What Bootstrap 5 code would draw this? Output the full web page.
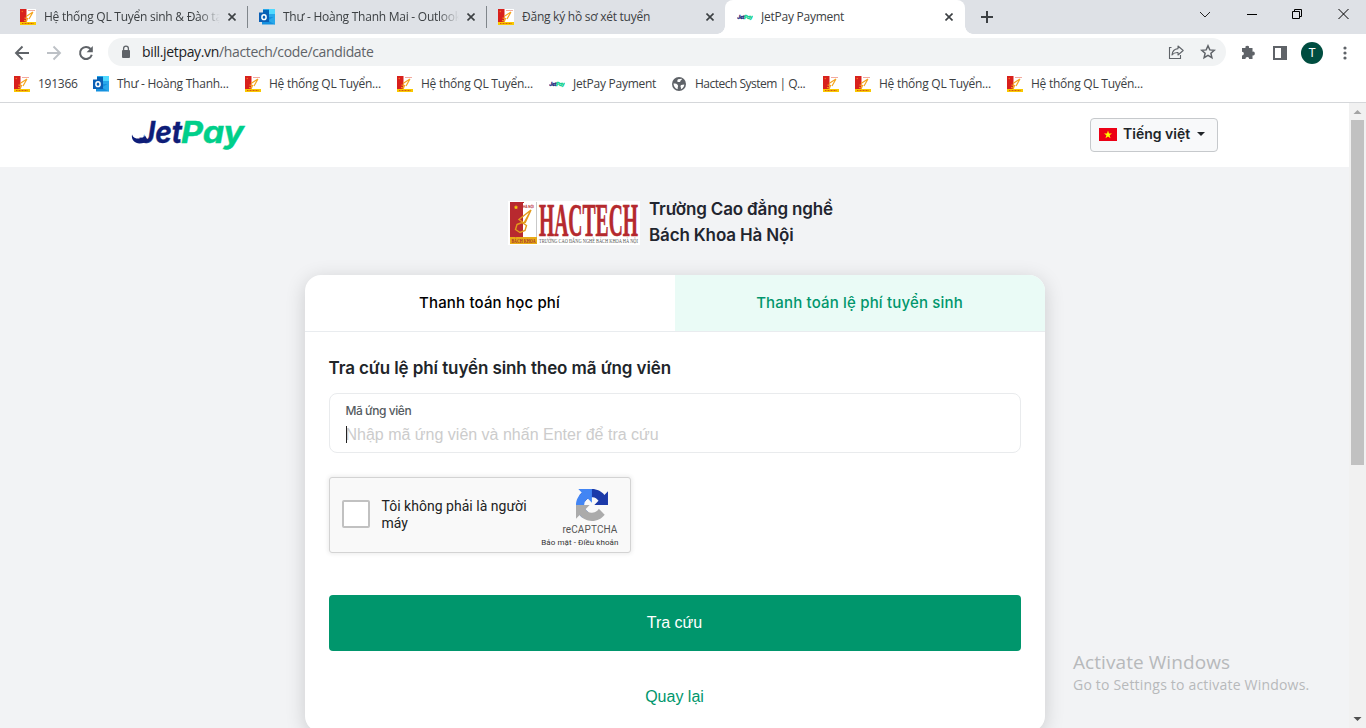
<!DOCTYPE html>
<html lang="vi">
<head>
<meta charset="utf-8">
<title>JetPay Payment</title>
<link rel="stylesheet" href="https://cdn.jsdelivr.net/npm/bootstrap@5.3.0/dist/css/bootstrap.min.css">
<style>
body{height:728px;overflow:hidden;font-family:Inter,"Noto Sans",sans-serif;color:#212529;background:#fff}
svg{display:block;flex:none}
.chrome-ui{font-family:"Open Sans","Noto Sans",sans-serif;font-size:12px;color:#3c4043;letter-spacing:-.25px}
.tabstrip{height:34px;background:#dee1e6;padding-left:8px}
.tab-item{width:239px;padding:0 11px 0 12px;position:relative}
.tab-item+.tab-item:not(.current){padding-left:11px;border-left:1px solid #80868b;border-image:linear-gradient(transparent 7px,#80868b 7px,#80868b 27px,transparent 27px) 1}
.tab-item.current{width:240px;padding-right:12px;background:#fff;border-radius:8px 8px 0 0}
.tab-item.current::before,.tab-item.current::after{content:"";position:absolute;bottom:0;width:8px;height:8px}
.tab-item.current::before{left:-8px;background:radial-gradient(circle at 0 0,#dee1e6 7.5px,#fff 8px)}
.tab-item.current::after{right:-8px;background:radial-gradient(circle at 100% 0,#dee1e6 7.5px,#fff 8px)}
.tab-title{width:176px;margin-left:8px;white-space:nowrap;overflow:hidden}
.fade-end{-webkit-mask-image:linear-gradient(90deg,#000 155px,transparent 176px)}
.win-controls{width:167px;padding:7px 17px 0 0}
.toolbar{height:34px;padding-top:4px}
.nav-icons{width:108px;padding-left:14px;gap:16px}
.omnibox{width:1118px;height:28px;border-radius:14px;background:#f1f3f4;padding:0 10px 0 8px}
.address{font-size:14px;color:#5f6368;margin-left:10px;letter-spacing:-.35px;margin-bottom:1px}
.address b{font-weight:400;color:#202124}
.tool-icons{padding-left:14px}
.avatar{width:22px;height:22px;border-radius:50%;background:#004d40;color:#fff;font:12px Roboto,sans-serif;margin-left:13px}
.menu-dots{margin-left:20px}
.bookmarks{height:35px;display:grid;grid-template-columns:79px 152px 152px 152px 122px 152px 32px 152px 152px;padding:0 0 2px 14px;border-bottom:1px solid #d5d7da;align-items:center}
.bookmarks>span{display:flex;align-items:center;gap:8px;white-space:nowrap}
.bookmarks>.tighter{letter-spacing:-.5px}
.viewport{height:625px}
.page-area{background:#f2f3f5;overflow:hidden}
.site-header{height:64px;background:#fff;padding:0 131px}
.lang-btn{width:128px;height:34px;border:1px solid #c6c9cc;border-radius:4px;background:#f8f9fa;font-size:14px;line-height:20px;font-weight:600;color:#212529;padding:0 8px 2px;margin-bottom:1px}
.lang-btn::after{margin-left:7px}
.lang-btn svg{margin:2px 6px 0 0}
.school{height:108px;padding:3px 0 0 508px}
.school-name{font-size:17px;font-weight:600;line-height:26px;color:#22252f;margin:-2px 0 0 9px;letter-spacing:-.15px}
.pay-card{width:740px;height:457px;border-radius:16px;box-shadow:0 4px 20px rgba(0,0,0,.16);border:0}
.pay-tabs{height:57px;border-bottom:1px solid #e9ecef;font-size:15px;font-weight:500;color:#000;letter-spacing:.17px}
.pay-tabs .chosen{background:#eafbf6;color:#00966c;border-top-right-radius:16px}
.pay-tabs>div{width:370px}
.form-title{font-size:17px;font-weight:600;line-height:24px;margin:24px 0 13px;letter-spacing:-.09px}
.code-field{height:60px;border:1px solid #e9ebed;border-radius:8px;padding:8px 16px}
.code-label{font-size:12px;line-height:18px;color:#555b61;font-weight:500;letter-spacing:-.45px}
.code-hint{font:16px/22px "Liberation Sans",sans-serif;color:#ccc;margin-top:4px;position:relative}
.caret-line{position:absolute;left:0;top:2px;width:1px;height:17px;background:#222}
.captcha{width:302px;height:76px;background:#f9f9f9;border:1px solid #d3d3d3;border-radius:3px;box-shadow:0 0 4px 1px rgba(0,0,0,.08);margin-top:24px;font-family:Roboto,sans-serif;padding:0 0 2px 12px}
.tick-box{width:28px;height:28px;border:2px solid #c1c1c1;border-radius:2px;background:#fff}
.captcha-text{width:152px;margin:1px 0 0 12px;font-size:14px;line-height:17px;color:#222;letter-spacing:.02px}
.captcha-brand{width:92px;color:#555;font-size:10px;padding:11px 8px 0 0}
.captcha-brand svg{margin-right:14px}
.rc-name{line-height:12px;margin:3px 4px 0 0;letter-spacing:.12px}
.rc-links{font-size:8px;line-height:13px;color:#333;white-space:nowrap;margin-right:3px;letter-spacing:.07px}
.lookup{height:56px;background:#00966c;border-radius:4px;color:#fff;margin-top:42px;font:16px "Liberation Sans",sans-serif}
.go-back{font:16px "Liberation Sans",sans-serif;color:#00966c;margin-top:37px}
.scroll-track{width:17px;background:#f1f1f1}
.scroll-thumb{width:13px;height:345px;background:#c1c1c1;margin-top:2px}
.watermark{position:absolute;left:1073px;top:649px;color:#b7b9bb;font-family:"Open Sans",sans-serif;white-space:nowrap}
.watermark .wm-big{font-size:19px;line-height:26px;letter-spacing:.07px}
.watermark .wm-sub{font-size:14px;line-height:20px;letter-spacing:.2px}
</style>
</head>
<body>
<svg width="0" height="0" class="position-absolute">
<defs>
<symbol id="hac" viewBox="0 0 16 16"><path fill="#fff" d="M0 0h16v16H0z"/><path fill="#d8201c" d="M0 0h6.500v13H0z"/><path fill="#f2a9a0" d="M8 1h7v1H8z"/><path fill="#f9c900" d="M0 13h16v3H0z"/><path d="M2 14.500h12" stroke="#d85a10" stroke-width="1.200" stroke-dasharray="1 .5"/><path d="M13 3 6 7.500M13 3 9 10M4.500 9l3 .5-1 2.500-2.500-.5" fill="none" stroke="#f4a51c" stroke-width="1.200"/><circle cx="2.300" cy="2.500" r=".8" fill="#f0701c"/></symbol>
<symbol id="outlook" viewBox="0 0 16 16"><path fill="#28a8ea" d="M4 0h12v8H4z"/><path fill="#50d9ff" d="M10 0h6v5h-6z"/><path fill="#0364b8" d="M4 1h6v5H4z"/><path fill="#1490df" d="M3 8h13v7.500H3z"/><path fill="#28a8ea" d="m16 7-7 4.500 7 4z"/><path fill="#0a5fb5" d="M0 3.500h10v9.500H0z"/><ellipse cx="5" cy="8.200" rx="2.100" ry="2.400" fill="none" stroke="#fff" stroke-width="1.500"/></symbol>
<symbol id="jp" viewBox="0 0 16 16"><g font-family="Inter" font-weight="700" font-style="italic" font-size="4.800" stroke-width=".3"><text x=".3" y="9.500" textLength="7" lengthAdjust="spacingAndGlyphs" fill="#15247b" stroke="#15247b">Jet</text><text x="7.200" y="9.500" textLength="8.300" lengthAdjust="spacingAndGlyphs" fill="#00cf8a" stroke="#00cf8a">Pay</text></g></symbol>
<symbol id="shut" viewBox="0 0 8 8"><path d="m.5.5 7 7m0-7-7 7" stroke="#3c4043" stroke-width="1.600"/></symbol>
<clipPath id="stemClip"><path d="M16 0h50v36H0V21l12.500-.5z"/></clipPath>
</defs>
</svg>

<div class="chrome-ui">
  <div class="tabstrip d-flex">
    <div class="tab-item d-flex align-items-center"><svg width="16" height="16"><use href="#hac"/></svg><span class="tab-title fade-end">Hệ thống QL Tuyển sinh &amp; Đào tạo</span><svg class="ms-auto" width="8" height="8"><use href="#shut"/></svg></div>
    <div class="tab-item d-flex align-items-center"><svg width="16" height="16"><use href="#outlook"/></svg><span class="tab-title fade-end">Thư - Hoàng Thanh Mai - Outlook</span><svg class="ms-auto" width="8" height="8"><use href="#shut"/></svg></div>
    <div class="tab-item d-flex align-items-center"><svg width="16" height="16"><use href="#hac"/></svg><span class="tab-title">Đăng ký hồ sơ xét tuyển</span><svg class="ms-auto" width="8" height="8"><use href="#shut"/></svg></div>
    <div class="tab-item current d-flex align-items-center"><svg width="16" height="16"><use href="#jp"/></svg><span class="tab-title">JetPay Payment</span><svg class="ms-auto" width="8" height="8"><use href="#shut"/></svg></div>
    <svg class="ms-3 mt-2" width="12" height="18" viewBox="0 0 12 18"><path d="M0 9h12M6 3v12" stroke="#3c4043" stroke-width="2"/></svg>
    <div class="win-controls d-flex justify-content-between ms-auto">
      <svg width="12" height="14"><path d="m1 5 5 5 5-5" fill="none" stroke="#222"/></svg>
      <svg width="10" height="14"><path d="M0 7.500h10" stroke="#000"/></svg>
      <svg width="10" height="14"><path d="M.5 4.500h7v7h-7zM2.500 4.500v-2h7v7h-2" fill="none" stroke="#000"/></svg>
      <svg width="11" height="14"><path d="m.5 2 10 10m0-10-10 10" stroke="#000"/></svg>
    </div>
  </div>
  <div class="toolbar d-flex">
    <div class="nav-icons d-flex align-items-center">
      <svg width="16" height="16"><path d="M15 8H2m6.500-6.500L2 8l6.500 6.500" fill="none" stroke="#5f6368" stroke-width="1.900"/></svg>
      <svg width="16" height="16"><path d="M1 8h13M7.500 1.500 14 8l-6.500 6.500" fill="none" stroke="#bdc1c6" stroke-width="1.900"/></svg>
      <svg width="16" height="16"><path d="M12.600 4A6 6 0 1 0 13.800 9.800" fill="none" stroke="#5f6368" stroke-width="2"/><path d="M14.800 1v6.200H8.600z" fill="#5f6368"/></svg>
    </div>
    <div class="omnibox d-flex align-items-center">
      <svg class="ms-1" width="12" height="14"><path d="M3 5h6a1 1 0 0 1 1 1v6a1 1 0 0 1-1 1H3a1 1 0 0 1-1-1V6a1 1 0 0 1 1-1z" fill="#5f6368"/><path d="M3.600 6V3.500a2.400 2.400 0 0 1 4.800 0V6" fill="none" stroke="#5f6368" stroke-width="1.300"/></svg>
      <span class="address"><b>bill.jetpay.vn</b>/hactech/code/candidate</span>
      <svg class="ms-auto" width="16" height="16"><path d="M3.500 3.500h-2v11h11V11" fill="none" stroke="#5f6368" stroke-width="1.100"/><path d="M10 2 15.200 6.500 10 11V8.600c-2.800-.2-4.500.5-6 2.400C4.300 7.400 6 5 10 4.600z" fill="none" stroke="#5f6368" stroke-width="1.100" stroke-linejoin="round"/></svg>
      <svg class="ms-3" width="16" height="16"><path d="m8 1.800 1.800 4.100 4.500.4-3.400 3 1 4.400L8 11.400l-3.900 2.300 1-4.400-3.400-3 4.500-.4z" fill="none" stroke="#5f6368" stroke-width="1.500"/></svg>
    </div>
    <div class="tool-icons d-flex align-items-center">
      <svg width="16" height="16"><path d="M2 3h3.500a1.800 1.800 0 1 1 3.500 0h3.500v3.700a1.900 1.900 0 1 1 0 3.700V14H9.200a1.900 1.900 0 0 0-3.800 0H2v-3.500a1.900 1.900 0 0 0 0-3.800z" fill="#5f6368"/></svg>
      <svg class="ms-3" width="16" height="16"><path d="M1 1h14v14H1zm2 2v10h6V3z" fill="#5f6368" fill-rule="evenodd"/></svg>
      <span class="avatar d-flex align-items-center justify-content-center">T</span>
      <svg class="menu-dots" width="4" height="14"><g fill="#5f6368"><circle cx="2" cy="2" r="1.600"/><circle cx="2" cy="7" r="1.600"/><circle cx="2" cy="12" r="1.600"/></g></svg>
    </div>
  </div>
  <div class="bookmarks">
    <span><svg width="16" height="16"><use href="#hac"/></svg>191366</span>
    <span><svg width="16" height="16"><use href="#outlook"/></svg>Thư - Hoàng Thanh...</span>
    <span><svg width="16" height="16"><use href="#hac"/></svg>Hệ thống QL Tuyển...</span>
    <span><svg width="16" height="16"><use href="#hac"/></svg>Hệ thống QL Tuyển...</span>
    <span><svg width="16" height="16"><use href="#jp"/></svg>JetPay Payment</span>
    <span class="tighter"><svg width="16" height="16"><circle cx="8" cy="8" r="7" fill="#5f6368"/><path d="M2.500 7.500c2 0 4 .2 4.500 2 .4 1.300-.6 1.200-.3 3.800C4 12.500 2.500 10 2.500 7.500zM7 3.200l4-.4c-.2 1.900-1.900 1.300-1.900 3.200H6.500c0-1.400-.5-1.500.5-2.800zm3 5.800 3.300-.4c0 2-1.500 4-3.500 4.600.9-1.700-.6-1.800-.3-3.200z" fill="#fff"/></svg>Hactech System | Q...</span>
    <span><svg width="16" height="16"><use href="#hac"/></svg></span>
    <span><svg width="16" height="16"><use href="#hac"/></svg>Hệ thống QL Tuyển...</span>
    <span><svg width="16" height="16"><use href="#hac"/></svg>Hệ thống QL Tuyển...</span>
  </div>
</div>

<div class="viewport d-flex">
  <main class="page-area flex-grow-1">
    <header class="site-header d-flex align-items-center justify-content-between">
      <svg width="116" height="36" viewBox="0 0 116 36">
        <path d="M1 17.500c1 3.500 5 4.500 8 4 2 0 4-1 5-3l3 5c-2.500 2.300-5 3-8.500 3C4 26.500 0 23 1 17.500z" fill="#0e1d78"/>
        <g font-family="Inter" font-weight="700" font-style="italic" font-size="30.500" stroke-width=".4"><text x="8" y="26" textLength="43" lengthAdjust="spacingAndGlyphs" fill="#0e1d78" stroke="#0e1d78" clip-path="url(#stemClip)">Jet</text><text x="50" y="26" textLength="63" lengthAdjust="spacingAndGlyphs" fill="#00cf8a" stroke="#00cf8a">Pay</text></g>
      </svg>
      <button class="lang-btn d-flex align-items-center dropdown-toggle"><svg width="18" height="13" viewBox="0 0 18 13"><path fill="#ec0015" d="M0 0h18v13H0z"/><path fill="#ff0" d="m9 2.500 1 3h3L10.600 7.300l.9 2.900L9 8.400l-2.500 1.800.9-2.900L5 5.500h3z"/></svg>Tiếng việt</button>
    </header>
    <section class="school d-flex align-items-center">
      <svg width="132" height="44" viewBox="0 0 132 44">
        <path fill="#fff" d="M0 0h132v44H0z"/>
        <path fill="#b8292f" d="M2 1h14v35H2z"/><path fill="#fff" d="M15 2h13v34H15z"/><path d="M28.500 1v36" stroke="#c9c9c9"/>
        <path fill="#e8ab16" d="M2 36h27v7H2z"/>
        <path d="m8 4 .7 1.500 1.500.2-1.100 1 .3 1.500L8 7.500l-1.300.7.200-1.500-1.100-1 1.500-.2z" fill="#f6c90e"/>
        <path d="M23 9 11 18.500l5 3.500zM23 9l-6 13M9 23.500l5-2 4.500 3-1.500 5-5 2-4.500-3z" fill="none" stroke="#e39b1b" stroke-width="1.400"/>
        <text x="15" y="6.500" font-family="Inter" font-weight="700" font-size="4" textLength="11" lengthAdjust="spacingAndGlyphs" fill="#b8292f">HÀ NỘI</text>
        <text x="3.500" y="42" font-family="Liberation Serif" font-weight="700" font-size="6" textLength="24" lengthAdjust="spacingAndGlyphs" fill="#a3332b">BÁCH KHOA</text>
        <text x="31" y="34.500" font-family="Liberation Serif" font-weight="700" font-size="47" textLength="99" lengthAdjust="spacingAndGlyphs" fill="#b52a2e" stroke="#b52a2e" stroke-width=".7">HACTECH</text>
        <text x="31" y="42" font-family="Liberation Serif" font-size="6.500" textLength="99" lengthAdjust="spacingAndGlyphs" fill="#555">TRƯỜNG CAO ĐẲNG NGHỀ BÁCH KHOA HÀ NỘI</text>
      </svg>
      <h1 class="school-name"><span class="d-block">Trường Cao đẳng nghề</span><span class="d-block">Bách Khoa Hà Nội</span></h1>
    </section>
    <div class="card pay-card mx-auto">
      <div class="pay-tabs d-flex text-center">
        <div class="d-flex align-items-center justify-content-center">Thanh toán học phí</div>
        <div class="chosen d-flex align-items-center justify-content-center">Thanh toán lệ phí tuyển sinh</div>
      </div>
      <div class="px-4">
        <h2 class="form-title">Tra cứu lệ phí tuyển sinh theo mã ứng viên</h2>
        <div class="code-field">
          <div class="code-label">Mã ứng viên</div>
          <div class="code-hint"><span class="caret-line"></span>Nhập mã ứng viên và nhấn Enter để tra cứu</div>
        </div>
        <div class="captcha d-flex align-items-center">
          <div class="tick-box"></div>
          <div class="captcha-text">Tôi không phải là người máy</div>
          <div class="captcha-brand d-flex flex-column align-items-end align-self-start ms-auto flex-shrink-0">
            <svg width="32" height="32" viewBox="0 0 64 64"><path d="M64 31.955l-.033-1.370V4.687l-7.160 7.160C50.948 4.674 42.033.093 32.050.093c-10.400 0-19.622 4.960-25.458 12.640l11.736 11.860a15.550 15.550 0 0 1 4.754-5.334c2.050-1.600 4.952-2.906 8.968-2.906.485 0 .860.057 1.135.163 4.976.393 9.288 3.140 11.828 7.124l-8.307 8.307L64 31.953" fill="#1c3aa9"/><path d="M31.862.094l-1.370.033H4.594l7.160 7.160C4.580 13.147 0 22.060 0 32.046c0 10.400 4.960 19.622 12.640 25.458L24.500 45.768a15.550 15.550 0 0 1-5.334-4.754c-1.600-2.050-2.906-4.952-2.906-8.968 0-.485.057-.860.163-1.135.393-4.976 3.140-9.288 7.124-11.828l8.307 8.307L31.860.095" fill="#4285f4"/><path d="M.001 32.045l.033 1.370v25.898l7.160-7.160c5.860 7.173 14.774 11.754 24.760 11.754 10.400 0 19.622-4.960 25.458-12.640l-11.736-11.860a15.550 15.550 0 0 1-4.754 5.334c-2.050 1.600-4.952 2.906-8.968 2.906-.485 0-.860-.057-1.135-.163-4.976-.393-9.288-3.140-11.828-7.124l8.307-8.307c-10.522.040-22.400.066-27.295-.005" fill="#ababab"/></svg>
            <span class="rc-name">reCAPTCHA</span>
            <span class="rc-links">Bảo mật - Điều khoản</span>
          </div>
        </div>
        <button class="btn lookup w-100 d-block border-0">Tra cứu</button>
        <div class="go-back text-center">Quay lại</div>
      </div>
    </div>
  </main>
  <div class="scroll-track d-flex flex-column align-items-center">
    <svg width="17" height="15"><path d="m8.500 7 4 4h-8z" fill="#a3a3a3"/></svg>
    <div class="scroll-thumb"></div>
    <svg class="mt-auto" width="17" height="17"><path d="m8.500 10 4-4h-8z" fill="#505050"/></svg>
  </div>
</div>
<div class="watermark"><div class="wm-big">Activate Windows</div><div class="wm-sub">Go to Settings to activate Windows.</div></div>
<script src="https://cdn.jsdelivr.net/npm/bootstrap@5.3.0/dist/js/bootstrap.bundle.min.js"></script>
</body>
</html>
